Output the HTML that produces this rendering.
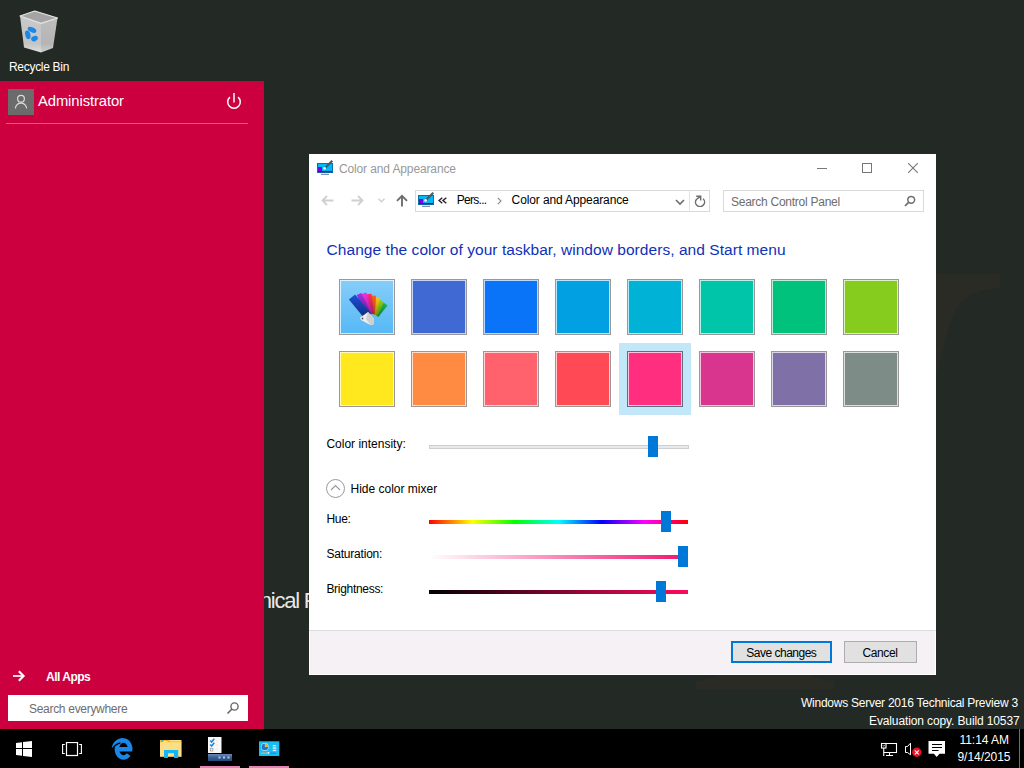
<!DOCTYPE html>
<html><head><meta charset="utf-8">
<style>
*{margin:0;padding:0;box-sizing:border-box}
html,body{width:1024px;height:768px;overflow:hidden}
body{background:#232925;font-family:"Liberation Sans",sans-serif;position:relative}
.a{position:absolute}
.t{position:absolute;line-height:1;white-space:nowrap}
#start{left:0;top:81px;width:264px;height:648px;background:#cc003f}
#dlg{left:309px;top:154px;width:627px;height:521px;background:#fff;overflow:hidden}
#tb{left:0;top:729px;width:1024px;height:39px;background:#000}
.sw{position:absolute;width:56px;height:56px;border:1px solid #9c9898;box-shadow:inset 0 0 0 1px rgba(255,255,255,0.72)}
.trk{position:absolute;left:120px;width:259px;height:4px}
.thumb{position:absolute;width:10px;height:21px;background:#0078d7}
</style></head><body>

<!-- desktop -->
<div class="a" id="bin" style="left:18px;top:9px;width:42px;height:46px">
<svg width="42" height="46" viewBox="0 0 42 46">
 <defs>
  <linearGradient id="bgl" x1="0" y1="0" x2="0" y2="1"><stop offset="0" stop-color="#c9c9c9"/><stop offset="0.75" stop-color="#c4c4c4"/><stop offset="1" stop-color="#dedede"/></linearGradient>
  <linearGradient id="bgr" x1="0" y1="0" x2="0" y2="1"><stop offset="0" stop-color="#bdbdbd"/><stop offset="0.75" stop-color="#b5b5b5"/><stop offset="1" stop-color="#d0d0d0"/></linearGradient>
 </defs>
 <path d="M2 7 L23 14.3 L23 43.4 L6 38.4 Z" fill="url(#bgl)"/>
 <path d="M23 14.3 L39.5 9 L35 39 L23 43.4 Z" fill="url(#bgr)"/>
 <path d="M2 7 L16.75 2 L39.5 9 L23 14.3 Z" fill="#a4a4a4" stroke="#e6e6e6" stroke-width="1.3" stroke-linejoin="round"/>
 <g fill="#1a88e8">
  <ellipse cx="14" cy="20.8" rx="4.6" ry="2.5" transform="rotate(25 14 20.8)"/>
  <ellipse cx="9.8" cy="25.8" rx="2.6" ry="4.4" transform="rotate(-15 9.8 25.8)"/>
  <ellipse cx="16.5" cy="29.6" rx="3.5" ry="2.6" transform="rotate(-25 16.5 29.6)"/>
 </g>
</svg>
</div>
<div class="t" id="binlbl" style="left:9px;top:60.6px;font-size:12px;color:#fff;letter-spacing:-0.3px">Recycle Bin</div>

<svg class="a" style="left:0;top:0" width="1024" height="768" viewBox="0 0 1024 768"><g fill="#2a2b25"><path d="M936 274 H1000 V288 C982 289 966 294 957 308 C950 320 944 345 936 378 Z"/><path d="M696 681 C706 680.5 714 678 718 674 H810 C815 678 825 680.5 834 681 V689.6 H696 Z"/></g></svg>
<div class="t" id="tech" style="left:218px;top:590px;font-size:22px;color:#e8e8e8;letter-spacing:-1.2px">Technical P</div>

<div class="t" id="wm1" style="left:801px;top:697px;font-size:12px;color:#fff;letter-spacing:-0.25px">Windows Server 2016 Technical Preview 3</div>
<div class="t" id="wm2" style="left:869px;top:715px;font-size:12px;color:#fff;letter-spacing:-0.12px">Evaluation copy. Build 10537</div>

<!-- start menu -->
<div class="a" id="start">
 <div class="a" style="left:8px;top:8px;width:26px;height:26px;background:#6b6b6b">
  <svg width="26" height="26" viewBox="0 0 26 26"><circle cx="13" cy="9.8" r="3.4" fill="none" stroke="#dcdcdc" stroke-width="1.2"/><path d="M7.3 19.3 C8 16 10.3 14.2 13 14.2 C15.7 14.2 18 16 18.7 19.3" fill="none" stroke="#dcdcdc" stroke-width="1.2"/></svg>
 </div>
 <div class="t" id="admin" style="left:38px;top:13.2px;font-size:14.8px;color:#fff;letter-spacing:-0.1px">Administrator</div>
 <svg class="a" style="left:224px;top:10px" width="20" height="20" viewBox="0 0 20 20"><path d="M5.95 6.17 A6.3 6.3 0 1 0 14.05 6.17" fill="none" stroke="#fff" stroke-width="1.5"/><line x1="10" y1="2" x2="10" y2="11.5" stroke="#fff" stroke-width="1.5"/></svg>
 <div class="a" style="left:6px;top:42px;width:242px;height:1px;background:#e0578a"></div>
 <svg class="a" style="left:12px;top:589px" width="14" height="12" viewBox="0 0 14 12"><path d="M1 6 H11.5" fill="none" stroke="#fff" stroke-width="1.7"/><path d="M6.8 1.2 L11.6 6 L6.8 10.8" fill="none" stroke="#fff" stroke-width="2.1"/></svg>
 <div class="t" id="allapps" style="left:46px;top:590px;font-size:12px;color:#fff;font-weight:bold;letter-spacing:-0.5px">All Apps</div>
 <div class="a" style="left:8px;top:614px;width:240px;height:26px;background:#fff">
  <div class="t" id="srch" style="left:21px;top:7.5px;font-size:12px;color:#6d6d6d;letter-spacing:-0.3px">Search everywhere</div>
  <svg class="a" style="left:218px;top:6px" width="14" height="14" viewBox="0 0 14 14"><circle cx="8.5" cy="5.5" r="3.6" fill="none" stroke="#666" stroke-width="1.4"/><line x1="6" y1="8" x2="1.5" y2="12.5" stroke="#666" stroke-width="1.6"/></svg>
 </div>
</div>

<!-- dialog -->
<div class="a" id="dlg">
 <svg class="a" style="left:7px;top:5px" width="18" height="18" viewBox="0 0 18 18"><rect x="1.5" y="4.5" width="15" height="9" fill="#00b8f4" stroke="#0a70a8"/><rect x="2" y="8" width="4" height="5" fill="#7a00e6"/><rect x="2" y="12" width="14" height="1.2" fill="#5a00c0"/><line x1="5" y1="15.3" x2="13" y2="15.3" stroke="#4a6a8a" stroke-width="0.9"/><path d="M8.3 9.7 L16.3 1.7" stroke="#455a64" stroke-width="2"/><circle cx="8.6" cy="9.4" r="1.4" fill="#f0f0f0"/></svg>
 <div class="t" id="title" style="left:29.9px;top:9px;font-size:12px;color:#999;letter-spacing:-0.12px">Color and Appearance</div>
 <div class="a" style="left:508px;top:14px;width:10px;height:1px;background:#777"></div>
 <div class="a" style="left:553px;top:9px;width:10px;height:10px;border:1px solid #777"></div>
 <svg class="a" style="left:599px;top:9px" width="10" height="10" viewBox="0 0 10 10"><path d="M0 0 L10 10 M10 0 L0 10" stroke="#777" stroke-width="1.1"/></svg>
 <!-- nav -->
 <svg class="a" style="left:12px;top:41px" width="13" height="11" viewBox="0 0 13 11"><path d="M12.5 5.5 H1.5 M6 1 L1.5 5.5 L6 10" fill="none" stroke="#d0d0d0" stroke-width="1.8"/></svg>
 <svg class="a" style="left:42px;top:41px" width="13" height="11" viewBox="0 0 13 11"><path d="M0.5 5.5 H11.5 M7 1 L11.5 5.5 L7 10" fill="none" stroke="#d0d0d0" stroke-width="1.8"/></svg>
 <svg class="a" style="left:69px;top:44px" width="7" height="5" viewBox="0 0 7 5"><path d="M0.5 0.8 L3.5 3.8 L6.5 0.8" fill="none" stroke="#d0d0d0" stroke-width="1.5"/></svg>
 <svg class="a" style="left:87px;top:40px" width="12" height="13" viewBox="0 0 12 13"><path d="M6 12.5 V1.8 M1 6.8 L6 1.8 L11 6.8" fill="none" stroke="#6d6d6d" stroke-width="1.9"/></svg>
 <div class="a" style="left:106px;top:36px;width:295px;height:22px;border:1px solid #d9d9d9"></div>
 <div class="a" style="left:380px;top:36px;width:1px;height:22px;background:#e3e3e3"></div>
 <svg class="a" style="left:108px;top:37px" width="18" height="18" viewBox="0 0 18 18"><rect x="1.5" y="4.5" width="15" height="9" fill="#00b8f4" stroke="#0a70a8"/><rect x="2" y="8" width="4" height="5" fill="#7a00e6"/><rect x="2" y="12" width="14" height="1.2" fill="#5a00c0"/><line x1="5" y1="15.3" x2="13" y2="15.3" stroke="#4a6a8a" stroke-width="0.9"/><path d="M8.3 9.7 L16.3 1.7" stroke="#455a64" stroke-width="2"/><circle cx="8.6" cy="9.4" r="1.4" fill="#f0f0f0"/></svg>
 <svg class="a" style="left:129px;top:43px" width="10" height="7" viewBox="0 0 10 7"><path d="M4.3 0.7 L1 3.5 L4.3 6.3 M8.3 0.7 L5 3.5 L8.3 6.3" fill="none" stroke="#222" stroke-width="1.4"/></svg>
 <div class="t" style="left:147.7px;top:40px;font-size:12px;color:#000;letter-spacing:-0.7px">Pers...</div>
 <svg class="a" style="left:188px;top:43px" width="5" height="8" viewBox="0 0 5 8"><path d="M0.8 0.8 L4 4 L0.8 7.2" fill="none" stroke="#888" stroke-width="1.1"/></svg>
 <div class="t" style="left:202.6px;top:40px;font-size:12px;color:#000;letter-spacing:-0.12px">Color and Appearance</div>
 <svg class="a" style="left:366px;top:45px" width="10" height="7" viewBox="0 0 10 7"><path d="M1 1 L5 5 L9 1" fill="none" stroke="#6d6d6d" stroke-width="1.6"/></svg>
 <svg class="a" style="left:385px;top:41px" width="12" height="12" viewBox="0 0 12 12"><path d="M9.1 3.8 A4.5 4.5 0 1 1 2.6 4.2 L6.3 1.6" fill="none" stroke="#6d6d6d" stroke-width="1.5"/><path d="M2.2 1.3 H6.7 V5.6" fill="none" stroke="#6d6d6d" stroke-width="1.4"/></svg>
 <div class="a" style="left:413.6px;top:36px;width:201px;height:22px;border:1px solid #d9d9d9"></div>
 <div class="t" style="left:422px;top:42px;font-size:12px;color:#6d6d6d;letter-spacing:-0.26px">Search Control Panel</div>
 <svg class="a" style="left:595px;top:41px" width="12" height="12" viewBox="0 0 12 12"><circle cx="7.2" cy="4.8" r="3.4" fill="none" stroke="#6d6d6d" stroke-width="1.5"/><line x1="4.8" y1="7.2" x2="1" y2="11" stroke="#6d6d6d" stroke-width="1.7"/></svg>
 <!-- heading -->
 <div class="t" id="head" style="left:17.6px;top:87.5px;font-size:15.5px;color:#0f30b8;letter-spacing:0.05px">Change the color of your taskbar, window borders, and Start menu</div>
 <div class="sw" style="left:30px;top:125px;background:linear-gradient(#86cdfa,#55b8f5)"><svg class="a" style="left:-1px;top:-1px" width="56" height="56" viewBox="0 0 56 56"><defs><linearGradient id="fshade" gradientUnits="userSpaceOnUse" x1="0" y1="16" x2="0" y2="40"><stop offset="0" stop-color="#000" stop-opacity="0"/><stop offset="1" stop-color="#000" stop-opacity="0.45"/></linearGradient></defs><polygon points="48.5,26.6 44.5,23.4 35.4,35.0 39.3,38.1" fill="#1ed85a"/><polygon points="48.5,26.6 44.5,23.4 35.4,35.0 39.3,38.1" fill="url(#fshade)"/><polygon points="45.0,22.9 40.6,20.7 33.8,34.6 38.3,36.8" fill="#98e61c"/><polygon points="45.0,22.9 40.6,20.7 33.8,34.6 38.3,36.8" fill="url(#fshade)"/><polygon points="41.2,19.2 36.4,18.0 32.3,34.6 37.1,35.8" fill="#ffcf1a"/><polygon points="41.2,19.2 36.4,18.0 32.3,34.6 37.1,35.8" fill="url(#fshade)"/><polygon points="37.0,16.8 32.0,16.6 30.9,34.9 35.9,35.2" fill="#ff6418"/><polygon points="37.0,16.8 32.0,16.6 30.9,34.9 35.9,35.2" fill="url(#fshade)"/><polygon points="32.5,14.7 27.5,15.3 29.7,35.3 34.7,34.8" fill="#ff2a6e"/><polygon points="32.5,14.7 27.5,15.3 29.7,35.3 34.7,34.8" fill="url(#fshade)"/><polygon points="27.4,13.6 22.6,15.0 28.7,36.0 33.5,34.6" fill="#ef2fd6"/><polygon points="27.4,13.6 22.6,15.0 28.7,36.0 33.5,34.6" fill="url(#fshade)"/><polygon points="22.3,13.9 17.7,16.1 27.7,36.8 32.2,34.6" fill="#9b2fe3"/><polygon points="22.3,13.9 17.7,16.1 27.7,36.8 32.2,34.6" fill="url(#fshade)"/><polygon points="16.1,15.4 9.9,20.6 25.4,39.2 31.6,34.1" fill="#1d4fd6"/><polygon points="16.1,15.4 9.9,20.6 25.4,39.2 31.6,34.1" fill="url(#fshade)"/><polygon points="21,38.7 29,33 35,39.4 34.3,45.6 31.4,46 22,41" fill="#eeeeee"/><polygon points="29,33 35,39.4 34.3,45.6 31.4,46 27,40" fill="#cfcfcf"/><circle cx="23.5" cy="39.5" r="0.9" fill="#555"/></svg></div>
 <div class="sw" style="left:102px;top:125px;background:#4169d3"></div>
 <div class="sw" style="left:174px;top:125px;background:#0a74f8"></div>
 <div class="sw" style="left:246px;top:125px;background:#00a0e3"></div>
 <div class="sw" style="left:318px;top:125px;background:#00b2d6"></div>
 <div class="sw" style="left:390px;top:125px;background:#00c5a8"></div>
 <div class="sw" style="left:462px;top:125px;background:#00c27c"></div>
 <div class="sw" style="left:534px;top:125px;background:#86cc1e"></div>
 <div class="a" style="left:310px;top:189px;width:72px;height:72px;background:#c2e7f8"></div>
 <div class="sw" style="left:30px;top:197px;background:#ffe81e"></div>
 <div class="sw" style="left:102px;top:197px;background:#ff8a41"></div>
 <div class="sw" style="left:174px;top:197px;background:#ff616d"></div>
 <div class="sw" style="left:246px;top:197px;background:#ff4a56"></div>
 <div class="sw" style="left:318px;top:197px;background:#ff2e7e;border-color:#5f6f7f"></div>
 <div class="sw" style="left:390px;top:197px;background:#d9358f"></div>
 <div class="sw" style="left:462px;top:197px;background:#8070a8"></div>
 <div class="sw" style="left:534px;top:197px;background:#7e8c87"></div>
 <!-- sliders -->
 <div class="t" style="left:17.4px;top:284px;font-size:12px;color:#000">Color intensity:</div>
 <div class="a" style="left:120px;top:291px;width:260px;height:4px;background:#e6e9ec;border:1px solid #cfcfcf"></div>
 <div class="thumb" style="left:339px;top:282px"></div>
 <div class="a" style="left:17px;top:325px;width:19px;height:19px;border:1px solid #9a9a9a;border-radius:50%"></div>
 <svg class="a" style="left:21px;top:330px" width="11" height="7" viewBox="0 0 11 7"><path d="M1 6 L5.5 1.5 L10 6" fill="none" stroke="#9a9a9a" stroke-width="1.2"/></svg>
 <div class="t" style="left:41.5px;top:329px;font-size:12px;color:#000">Hide color mixer</div>
 <div class="t" style="left:17.4px;top:359px;font-size:12px;color:#000;letter-spacing:-0.3px">Hue:</div>
 <div class="trk" style="top:366px;background:linear-gradient(90deg,#f00,#ff0,#0f0,#0ff,#00f,#f0f,#f00)"></div>
 <div class="thumb" style="left:352px;top:357px"></div>
 <div class="t" style="left:17.4px;top:394px;font-size:12px;color:#000;letter-spacing:-0.2px">Saturation:</div>
 <div class="trk" style="top:401px;background:linear-gradient(90deg,#fff,#f0146e)"></div>
 <div class="thumb" style="left:369px;top:392px"></div>
 <div class="t" style="left:17.4px;top:429px;font-size:12px;color:#000;letter-spacing:-0.3px">Brightness:</div>
 <div class="trk" style="top:436px;background:linear-gradient(90deg,#000,#ff0a5c)"></div>
 <div class="thumb" style="left:347px;top:427px"></div>
 <!-- footer -->
 <div class="a" style="left:0;top:476px;width:627px;height:1px;background:#dcdcdc"></div>
 <div class="a" style="left:1px;top:477px;width:625px;height:43px;background:#f6f1f4"></div>
 <div class="a" style="left:422px;top:487px;width:101px;height:22px;background:#e1e1e1;border:2px solid #0078d7"></div>
 <div class="t" style="left:437.3px;top:493px;font-size:12px;color:#000;letter-spacing:-0.5px">Save changes</div>
 <div class="a" style="left:535px;top:487px;width:73px;height:22px;background:#e1e1e1;border:1px solid #adadad"></div>
 <div class="t" style="left:553.5px;top:493px;font-size:12px;color:#000;letter-spacing:-0.4px">Cancel</div>
</div>

<!-- taskbar -->
<div class="a" id="tb">
 <svg class="a" style="left:16px;top:12px" width="16" height="16" viewBox="0 0 16 16"><path d="M0 2 L6 1.2 V7 H0 Z M7 1 L16 0 V7 H7 Z M0 8 H6 V14.8 L0 14 Z M7 8 H16 V16 L7 14.9 Z" fill="#fff"/></svg>
 <svg class="a" style="left:62px;top:13px" width="20" height="15" viewBox="0 0 20 15"><rect x="4.5" y="0.5" width="11" height="13" fill="none" stroke="#fff" stroke-width="1.2"/><path d="M2.8 2.5 H0.6 V11.5 H2.8 M17.2 2.5 H19.4 V11.5 H17.2" fill="none" stroke="#fff" stroke-width="1.1"/></svg>
 <svg class="a" style="left:108px;top:5px" width="28" height="28" viewBox="0 0 28 28"><path d="M20.56 20.46 A6.6 8.5 0 1 1 22.10 15" fill="none" stroke="#1a86e8" stroke-width="4.5"/><rect x="9" y="13" width="15.3" height="4.5" fill="#1a86e8"/><path d="M3.8 14.5 C4.2 8.5 9 4.1 15.5 4.1 L15.5 8.6 C10.5 8.6 7 10.8 3.8 14.5 Z" fill="#1a86e8"/><path d="M4 15 C6.5 11.5 9 9.6 12.5 8.9" fill="none" stroke="#000" stroke-width="1.1"/></svg>
 <svg class="a" style="left:160px;top:10px" width="22" height="20" viewBox="0 0 22 20"><rect x="0" y="1" width="21.4" height="16.8" fill="#fcdf84"/><path d="M0 1 H8.8 L10.2 2.2 H21.4 V3.2 H0 Z" fill="#f5c443"/><path d="M0 1 H8.8 L10.2 3 H0 Z" fill="#efb52c"/><circle cx="2.2" cy="1.9" r="0.9" fill="#20b8c8"/><rect x="3.5" y="2" width="4" height="0.9" fill="#fff3b0"/><rect x="21" y="3" width="0.4" height="14.8" fill="#f0c040"/><path d="M4 11 H18.2 V19 H14 V14.3 H8 V19 H4 Z" fill="#12b6f4"/></svg>
 <svg class="a" style="left:208px;top:8px" width="24" height="24" viewBox="0 0 24 24"><defs><linearGradient id="cbar" x1="0" y1="0" x2="0" y2="1"><stop offset="0" stop-color="#6a88b8"/><stop offset="0.5" stop-color="#3e5f90"/><stop offset="1" stop-color="#1a4a85"/></linearGradient></defs><rect x="0" y="0" width="13.5" height="16" fill="#f9f8f6"/><path d="M2.2 3.5 L3.6 5 L6.3 1.8 M2.2 7.5 L3.6 9 L6.3 5.8" fill="none" stroke="#1a8ad8" stroke-width="1.6"/><rect x="2.3" y="11.3" width="2.6" height="2.6" fill="none" stroke="#9a9a9a" stroke-width="0.8"/><path d="M7.5 4 H10 M7.5 8 H10 M7.5 12 H10" stroke="#e2e2e2" stroke-width="0.8"/><rect x="0" y="17" width="24" height="7" fill="url(#cbar)"/><rect x="10.5" y="19.5" width="2" height="2" fill="#b8c4d8"/><rect x="15" y="19.5" width="2" height="2" fill="#b8c4d8"/><rect x="19.5" y="19.5" width="2" height="2" fill="#b8c4d8"/></svg>
 <svg class="a" style="left:259px;top:12px" width="21" height="16" viewBox="0 0 21 16"><rect x="0" y="0.3" width="20.3" height="14.7" fill="#18bdf5"/><circle cx="5.8" cy="6" r="3.9" fill="#bfe8fb"/><circle cx="5.8" cy="6" r="3.3" fill="#1a78d0"/><path d="M5.8 6 V2.7 A3.3 3.3 0 0 1 9.1 6 Z" fill="#f9b233"/><rect x="13.8" y="4" width="3.4" height="1.3" fill="#e8f6ff"/><rect x="16.5" y="4" width="1" height="1.3" fill="#f08a30"/><rect x="13.8" y="6.4" width="3.4" height="1.3" fill="#e8f6ff"/><rect x="13.8" y="8.8" width="3.4" height="1.3" fill="#e8f6ff"/><rect x="2" y="11.6" width="6.3" height="1.1" fill="#f9b233"/><rect x="8.6" y="11" width="1.8" height="1.8" fill="#e8f6ff"/><rect x="10.6" y="11.6" width="6.5" height="1.1" fill="#1a88d8"/></svg>
 <div class="a" style="left:200px;top:37px;width:40px;height:2px;background:#e583b5"></div>
 <div class="a" style="left:249px;top:37px;width:40px;height:2px;background:#e583b5"></div>
 <svg class="a" style="left:880px;top:12px" width="18" height="16" viewBox="0 0 18 16"><g fill="none" stroke="#fff" stroke-width="1.1"><rect x="1.5" y="2.5" width="4.5" height="4.5"/><path d="M2.8 4.2 L3.75 5.3 L4.7 4.2" stroke-width="0.8"/><path d="M3.75 7 V15"/><path d="M6 2.5 H16.5 V11.5 H3.75"/><path d="M9.5 11.5 V14.5 M6 14.5 H13"/></g></svg>
 <svg class="a" style="left:904px;top:13px" width="18" height="16" viewBox="0 0 18 16"><path d="M1.5 4.5 H3.5 L6.5 1.2 V12.8 L3.5 10.5 H1.5 Z" fill="none" stroke="#fff" stroke-width="1"/><circle cx="12.8" cy="10.3" r="4.7" fill="#e81123"/><path d="M10.8 8.3 L14.8 12.3 M14.8 8.3 L10.8 12.3" stroke="#fff" stroke-width="1.1"/></svg>
 <svg class="a" style="left:928px;top:12px" width="18" height="17" viewBox="0 0 18 17"><path d="M0.5 0 H17 V12.7 H11.5 L8.7 16 L5.9 12.7 H0.5 Z" fill="#fff"/><path d="M4 3.5 H14 M4 6.5 H14 M4 9.5 H10.5" stroke="#000" stroke-width="1"/></svg>
 <div class="t" id="time" style="left:959.5px;top:5px;font-size:12px;color:#fff;letter-spacing:-0.05px">11:14 AM</div>
 <div class="t" id="date" style="left:957.5px;top:22px;font-size:12px;color:#fff;letter-spacing:-0.05px">9/14/2015</div>
 <div class="a" style="left:1019px;top:0;width:1px;height:39px;background:#707070"></div>
</div>

</body></html>
